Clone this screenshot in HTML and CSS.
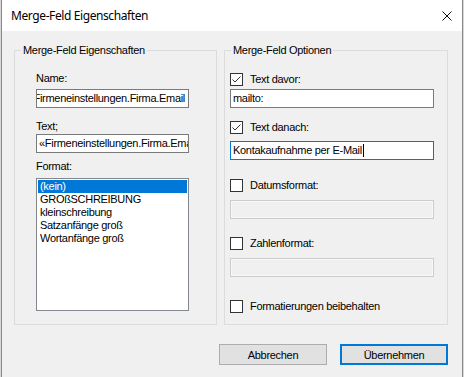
FILE: index.html
```html
<!DOCTYPE html>
<html lang="de">
<head>
    <meta charset="UTF-8">
    <title>Merge-Feld Eigenschaften</title>
    <link rel="stylesheet" href="styles.css">
</head>
<body>
    <div class="window">
        <div class="titlebar">
            <span class="title">Merge-Feld Eigenschaften</span>
            <svg class="close" width="10" height="10" viewBox="0 0 10 10">
                <path d="M0.5 0.5 L9.5 9.5 M9.5 0.5 L0.5 9.5" stroke="#111" stroke-width="1" fill="none"/>
            </svg>
        </div>
        <div class="client">
            <div class="groups">
                <fieldset class="group group-left">
                    <legend>Merge-Feld Eigenschaften</legend>
                    <div class="label label-name">Name:</div>
                    <div class="textbox textbox-end"><span>«Firmeneinstellungen.Firma.Email</span></div>
                    <div class="label label-text">Text;</div>
                    <div class="textbox textbox-text"><span>«Firmeneinstellungen.Firma.Email»</span></div>
                    <div class="label label-format">Format:</div>
                    <div class="listbox">
                        <div class="list-item selected">(kein)</div>
                        <div class="list-item">GROßSCHREIBUNG</div>
                        <div class="list-item">kleinschreibung</div>
                        <div class="list-item">Satzanfänge groß</div>
                        <div class="list-item">Wortanfänge groß</div>
                    </div>
                </fieldset>
                <fieldset class="group group-right">
                    <legend>Merge-Feld Optionen</legend>
                    <div class="check-row row-davor">
                        <svg class="checkbox" width="13" height="13" viewBox="0 0 13 13">
                            <rect x="0.5" y="0.5" width="12" height="12" fill="#fff" stroke="#333"/>
                            <path d="M2.5 6.5 L5 9 L10.5 3.5" stroke="#333" stroke-width="1" fill="none"/>
                        </svg>
                        <span>Text davor:</span>
                    </div>
                    <div class="textbox option-box box-davor"><span>mailto:</span></div>
                    <div class="check-row row-danach">
                        <svg class="checkbox" width="13" height="13" viewBox="0 0 13 13">
                            <rect x="0.5" y="0.5" width="12" height="12" fill="#fff" stroke="#333"/>
                            <path d="M2.5 6.5 L5 9 L10.5 3.5" stroke="#333" stroke-width="1" fill="none"/>
                        </svg>
                        <span>Text danach:</span>
                    </div>
                    <div class="textbox option-box box-danach focused"><span>Kontakaufnahme per E-Mail</span><i class="caret"></i></div>
                    <div class="check-row row-datum">
                        <svg class="checkbox" width="13" height="13" viewBox="0 0 13 13">
                            <rect x="0.5" y="0.5" width="12" height="12" fill="#fff" stroke="#333"/>
                        </svg>
                        <span>Datumsformat:</span>
                    </div>
                    <div class="textbox option-box box-datum disabled"></div>
                    <div class="check-row row-zahl">
                        <svg class="checkbox" width="13" height="13" viewBox="0 0 13 13">
                            <rect x="0.5" y="0.5" width="12" height="12" fill="#fff" stroke="#333"/>
                        </svg>
                        <span>Zahlenformat:</span>
                    </div>
                    <div class="textbox option-box box-zahl disabled"></div>
                    <div class="check-row row-format">
                        <svg class="checkbox" width="13" height="13" viewBox="0 0 13 13">
                            <rect x="0.5" y="0.5" width="12" height="12" fill="#fff" stroke="#333"/>
                        </svg>
                        <span>Formatierungen beibehalten</span>
                    </div>
                </fieldset>
            </div>
            <div class="buttons">
                <button class="btn">Abbrechen</button>
                <button class="btn btn-default">Übernehmen</button>
            </div>
        </div>
    </div>
</body>
</html>
```

FILE: styles.css
```css
:root {
    --face: #f0f0f0;
    --group-border: #dcdcdc;
    --box-border: #7a7a7a;
    --accent: #0078d7;
}

* {
    margin: 0;
    padding: 0;
    box-sizing: border-box;
}

body {
    background: #d8d8d8;
    font-family: "Liberation Sans", Arial, sans-serif;
    font-size: 11px;
    line-height: 13px;
    letter-spacing: -0.3px;
    color: #000;
    height: 377px;
    overflow: hidden;
}

.window {
    margin-left: 1px;
    width: 462px;
    height: 377px;
    border-left: 1px solid #888;
    border-right: 1px solid #888;
    background: var(--face);
}

.titlebar {
    height: 31px;
    background: #fff;
    display: flex;
    align-items: center;
    justify-content: space-between;
    padding: 0 10px 0 9px;
}

.title {
    font-family: "Noto Sans", "Open Sans", sans-serif;
    font-size: 12px;
    line-height: 16px;
    letter-spacing: -0.4px;
}

.close {
    display: block;
}

.client {
    padding: 13px 0 0 12px;
}

.groups {
    display: flex;
    gap: 7px;
}

.group {
    border: 1px solid var(--group-border);
    height: 281px;
    display: flex;
    flex-direction: column;
    align-items: flex-start;
}

.group legend {
    padding: 0 2px;
    line-height: 13px;
}

.group-left {
    width: 203px;
    padding: 15px 0 0 21px;
}

.group-left legend {
    margin-left: -15px;
}

.group-right {
    width: 224px;
    padding: 0 0 0 5px;
}

.group-right legend {
    margin-left: 1px;
}

.label {
    height: 13px;
}

.label-text {
    margin-top: 12px;
}

.label-format {
    margin-top: 7px;
}

.textbox {
    height: 19px;
    background: #fff;
    border: 1px solid var(--box-border);
    display: flex;
    align-items: center;
    overflow: hidden;
    white-space: nowrap;
    padding: 0 3px 0 2px;
}

.group-left .textbox {
    width: 153px;
    margin-top: 4px;
}

.group-left .textbox-text {
    margin-top: 1px;
}

.textbox-end {
    justify-content: flex-end;
}

.textbox span {
    flex-shrink: 0;
}

.listbox {
    margin-top: 5px;
    width: 153px;
    height: 133px;
    background: #fff;
    border: 1px solid #828790;
    padding: 1px;
}

.list-item {
    height: 13px;
    padding-left: 2px;
    white-space: nowrap;
}

.list-item.selected {
    background: var(--accent);
    color: #fff;
}

.check-row {
    display: flex;
    align-items: center;
    gap: 7px;
    height: 13px;
}

.checkbox {
    display: block;
    flex-shrink: 0;
}

.row-davor {
    margin-top: 16px;
}

.row-danach {
    margin-top: 13px;
}

.row-datum {
    margin-top: 19px;
}

.row-zahl {
    margin-top: 18px;
}

.row-format {
    margin-top: 23px;
}

.option-box {
    width: 204px;
}

.box-davor {
    margin-top: 3px;
}

.box-danach {
    margin-top: 7px;
}

.box-datum,
.box-zahl {
    margin-top: 8px;
}

.textbox.focused {
    border-color: var(--accent);
}

.caret {
    display: block;
    width: 1px;
    height: 13px;
    background: #000;
    margin-left: 1px;
}

.textbox.disabled {
    background: var(--face);
    border-color: #cccccc;
    box-shadow: inset 0 0 0 1px #f8f8f8;
}

.buttons {
    display: flex;
    justify-content: flex-end;
    gap: 13px;
    margin-top: 19px;
    padding-right: 14px;
}

.btn {
    width: 108px;
    height: 21px;
    font-family: "Liberation Sans", Arial, sans-serif;
    font-size: 11px;
    letter-spacing: -0.3px;
    color: #000;
    background: #e1e1e1;
    border: 1px solid #adadad;
}

.btn-default {
    border: 2px solid var(--accent);
}
```
